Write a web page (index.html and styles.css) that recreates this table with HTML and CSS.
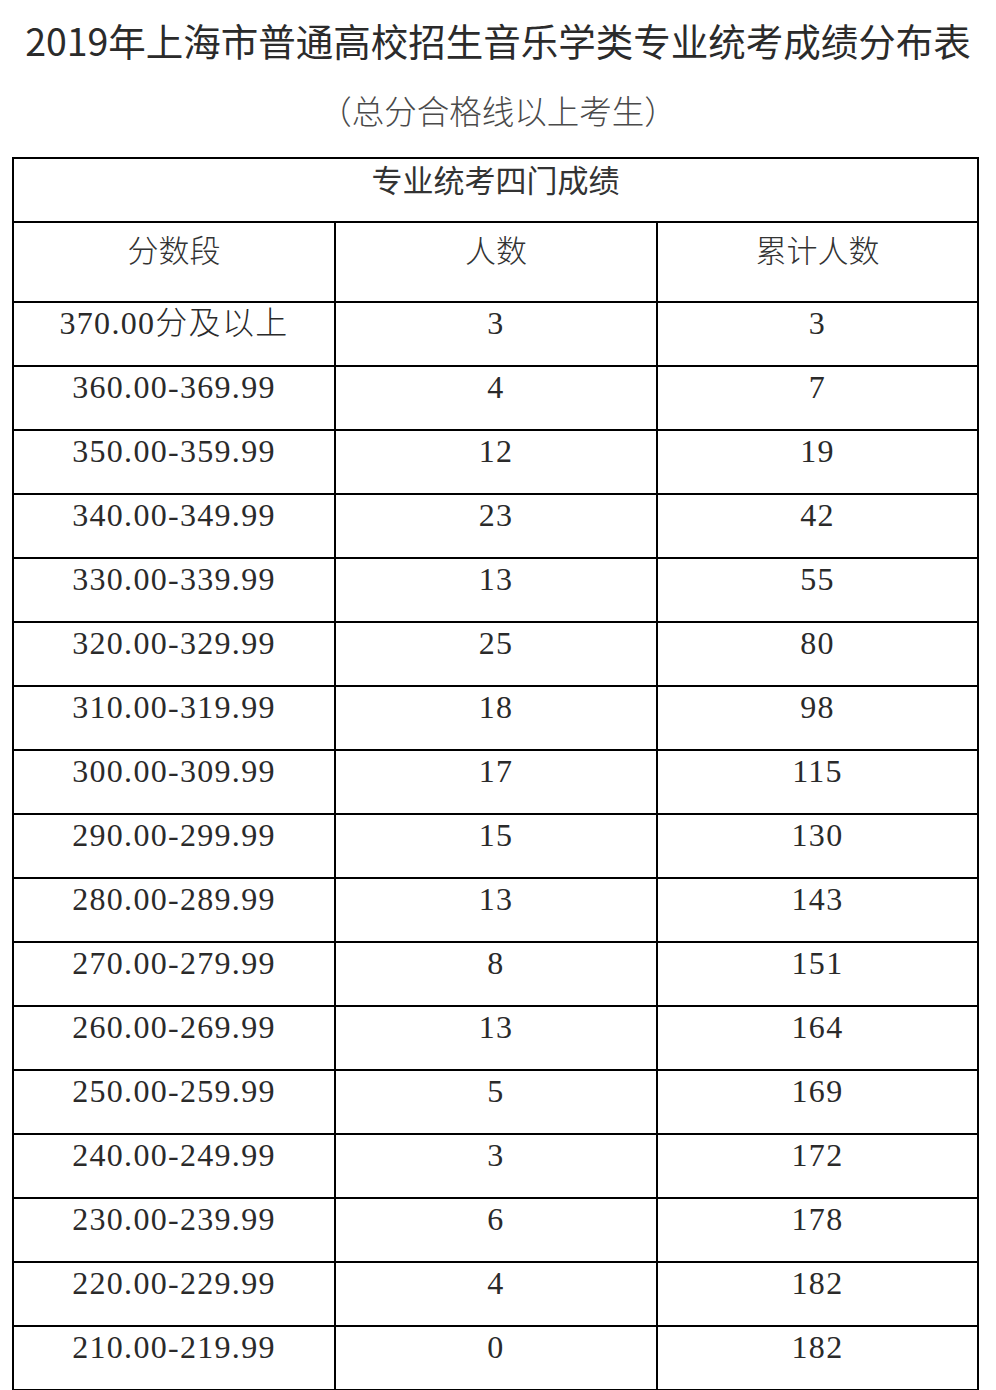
FILE: index.html
```html
<!DOCTYPE html>
<html>
<head>
<meta charset="utf-8">
<title>2019年上海市普通高校招生音乐学类专业统考成绩分布表</title>
<link rel="stylesheet" href="styles.css">
</head>
<body>
<div class="page">
  <h1 class="title">2019年上海市普通高校招生音乐学类专业统考成绩分布表</h1>
  <p class="subtitle">（总分合格线以上考生）</p>
  <div class="table">
    <div class="cell span caption">专业统考四门成绩</div>
    <div class="cell head">分数段</div>
    <div class="cell head">人数</div>
    <div class="cell head">累计人数</div>

    <div class="cell num">370.00分及以上</div><div class="cell num">3</div><div class="cell num">3</div>
    <div class="cell num">360.00-369.99</div><div class="cell num">4</div><div class="cell num">7</div>
    <div class="cell num">350.00-359.99</div><div class="cell num">12</div><div class="cell num">19</div>
    <div class="cell num">340.00-349.99</div><div class="cell num">23</div><div class="cell num">42</div>
    <div class="cell num">330.00-339.99</div><div class="cell num">13</div><div class="cell num">55</div>
    <div class="cell num">320.00-329.99</div><div class="cell num">25</div><div class="cell num">80</div>
    <div class="cell num">310.00-319.99</div><div class="cell num">18</div><div class="cell num">98</div>
    <div class="cell num">300.00-309.99</div><div class="cell num">17</div><div class="cell num">115</div>
    <div class="cell num">290.00-299.99</div><div class="cell num">15</div><div class="cell num">130</div>
    <div class="cell num">280.00-289.99</div><div class="cell num">13</div><div class="cell num">143</div>
    <div class="cell num">270.00-279.99</div><div class="cell num">8</div><div class="cell num">151</div>
    <div class="cell num">260.00-269.99</div><div class="cell num">13</div><div class="cell num">164</div>
    <div class="cell num">250.00-259.99</div><div class="cell num">5</div><div class="cell num">169</div>
    <div class="cell num">240.00-249.99</div><div class="cell num">3</div><div class="cell num">172</div>
    <div class="cell num">230.00-239.99</div><div class="cell num">6</div><div class="cell num">178</div>
    <div class="cell num">220.00-229.99</div><div class="cell num">4</div><div class="cell num">182</div>
    <div class="cell num">210.00-219.99</div><div class="cell num">0</div><div class="cell num">182</div>
  </div>
</div>
</body>
</html>
```
FILE: styles.css
```css
html, body {
  margin: 0;
  padding: 0;
  background: #ffffff;
}

.page {
  width: 996px;
  padding-top: 12px;
}

.title {
  margin: 0;
  font-family: "Noto Sans CJK SC", "Noto Sans", sans-serif;
  font-weight: 400;
  font-size: 37.5px;
  line-height: 56px;
  color: #2b2b2b;
  text-align: center;
  white-space: nowrap;
}

.subtitle {
  margin: 20px 0 0 0;
  font-family: "Noto Sans CJK SC", sans-serif;
  font-weight: 300;
  font-size: 32.5px;
  line-height: 44px;
  color: #4a4a4a;
  text-align: center;
}

.table {
  display: grid;
  grid-template-columns: 322px 322px 321px;
  width: max-content;
  margin: 25px 0 0 12px;
  border-left: 2px solid #000;
  border-top: 2px solid #000;
}

.cell {
  box-sizing: border-box;
  height: 64px;
  border-right: 2px solid #000;
  border-bottom: 2px solid #000;
  text-align: center;
  font-family: "Liberation Serif", "Times New Roman", Times, "DejaVu Serif", "Noto Sans CJK SC", serif;
  font-size: 32px;
  line-height: 40px;
  color: #2a2a2a;
  white-space: nowrap;
}

.span {
  grid-column: 1 / -1;
}

.caption {
  font-family: "Noto Sans CJK SC", sans-serif;
  font-size: 31px;
  color: #333333;
}

.head {
  height: 80px;
  padding-top: 9px;
  font-family: "Noto Sans CJK SC", sans-serif;
  font-weight: 300;
  font-size: 31px;
  line-height: 34px;
  color: #333333;
}

.num {
  font-weight: 300;
  letter-spacing: 1.3px;
}
```
